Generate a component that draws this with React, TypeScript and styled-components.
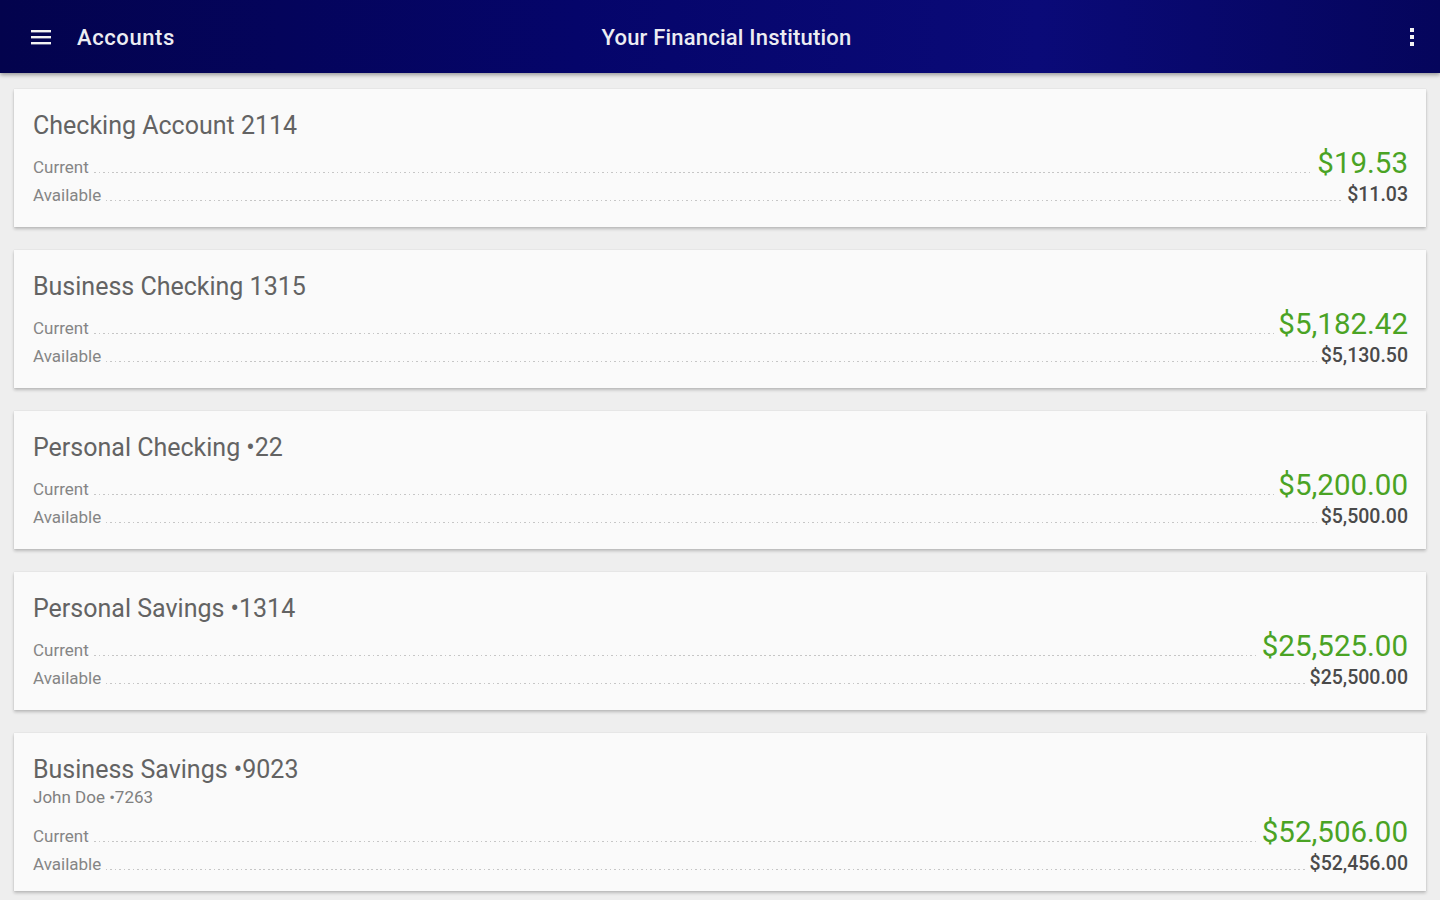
import React from "react";
import styled, { createGlobalStyle } from "styled-components";

const GlobalStyle = createGlobalStyle`
  html, body {
    margin: 0;
    padding: 0;
    background: #eeeeee;
    font-family: Roboto, "Noto Sans", sans-serif;
  }
`;

const Page = styled.div`
  width: 1440px;
  min-height: 900px;
  background: #eeeeee;
`;

const TopBar = styled.header`
  height: 73px;
  display: grid;
  grid-template-columns: 1fr auto 1fr;
  align-items: center;
  padding: 0 15px 0 28px;
  box-sizing: border-box;
  background: linear-gradient(90deg, #03034d 0%, #05056a 40%, #0a0a78 72%, #05055c 100%);
  box-shadow: 0 2px 4px rgba(0, 0, 0, 0.35);
  color: #ececf2;
`;

const BarSide = styled.div<{ $end?: boolean }>`
  display: flex;
  align-items: center;
  justify-content: ${(p) => (p.$end ? "flex-end" : "flex-start")};
`;

const IconButton = styled.button`
  border: 0;
  outline: 0;
  background: transparent;
  padding: 0;
  width: 26px;
  height: 26px;
  display: flex;
  align-items: center;
  justify-content: center;
  color: #f2f2f2;
  cursor: pointer;
`;

const BarTitle = styled.div`
  font-size: 22px;
  font-weight: 500;
  margin-left: 23px;
  letter-spacing: 0.6px;
  margin-top: 2px;
`;

const Institution = styled.div`
  font-size: 22px;
  font-weight: 500;
  letter-spacing: 0.2px;
  margin-top: 2px;
`;

const List = styled.main`
  display: flex;
  flex-direction: column;
  gap: 23px;
  padding: 16px 14px 9px 14px;
`;

const Card = styled.section<{ $tight?: boolean }>`
  background: #fafafa;
  box-shadow: 0 2px 3px rgba(0, 0, 0, 0.22), 0 0 1px rgba(0, 0, 0, 0.12);
  padding: 22px 18px ${(p) => (p.$tight ? 13 : 18)}px 19px;
  display: flex;
  flex-direction: column;
`;

const CardTitle = styled.div`
  font-size: 25px;
  line-height: 30px;
  color: #636363;
`;

const Owner = styled.div`
  font-size: 17px;
  line-height: 20px;
  color: #808080;
  margin-top: 2px;
`;

const Balances = styled.div<{ $gap: number }>`
  margin-top: ${(p) => p.$gap}px;
  display: flex;
  flex-direction: column;
  gap: 4px;
`;

const Row = styled.div`
  display: flex;
  align-items: baseline;
  height: 28px;
`;

const Label = styled.span`
  font-size: 17px;
  color: #858585;
`;

const Dots = styled.span`
  flex: 1;
  height: 1px;
  margin: 0 4px 0 5px;
  background-image: repeating-linear-gradient(90deg, #c6c6c6 0 1.5px, transparent 1.5px 4.5px);
`;

const Amount = styled.span<{ $main?: boolean }>`
  font-size: ${(p) => (p.$main ? "29.5px" : "19.5px")};
  font-weight: ${(p) => (p.$main ? 400 : 500)};
  color: ${(p) => (p.$main ? "#4aa324" : "#4a4a4a")};
  line-height: 28px;
`;

interface Account {
  name: string;
  owner?: string;
  current: string;
  available: string;
}

const accounts: Account[] = [
  { name: "Checking Account 2114", current: "$19.53", available: "$11.03" },
  { name: "Business Checking 1315", current: "$5,182.42", available: "$5,130.50" },
  { name: "Personal Checking \u202222", current: "$5,200.00", available: "$5,500.00" },
  { name: "Personal Savings \u20221314", current: "$25,525.00", available: "$25,500.00" },
  {
    name: "Business Savings \u20229023",
    owner: "John Doe \u20227263",
    current: "$52,506.00",
    available: "$52,456.00",
  },
];

const MenuIcon = () => (
  <svg width="22" height="18" viewBox="0 0 22 18">
    <rect x="1" y="2" width="20" height="2.4" fill="currentColor" />
    <rect x="1" y="8" width="20" height="2.4" fill="currentColor" />
    <rect x="1" y="14" width="20" height="2.4" fill="currentColor" />
  </svg>
);

const MoreIcon = () => (
  <svg width="6" height="20" viewBox="0 0 6 20">
    <rect x="1" y="1" width="4" height="4" fill="currentColor" />
    <rect x="1" y="8" width="4" height="4" fill="currentColor" />
    <rect x="1" y="15" width="4" height="4" fill="currentColor" />
  </svg>
);

const AccountCard = ({ account }: { account: Account }) => (
  <Card $tight={!!account.owner}>
    <CardTitle>{account.name}</CardTitle>
    {account.owner && <Owner>{account.owner}</Owner>}
    <Balances $gap={account.owner ? 11 : 8}>
      <Row>
        <Label>Current</Label>
        <Dots />
        <Amount $main>{account.current}</Amount>
      </Row>
      <Row>
        <Label>Available</Label>
        <Dots />
        <Amount>{account.available}</Amount>
      </Row>
    </Balances>
  </Card>
);

const App = () => {
  return (
    <Page>
      <GlobalStyle />
      <TopBar>
        <BarSide>
          <IconButton>
            <MenuIcon />
          </IconButton>
          <BarTitle>Accounts</BarTitle>
        </BarSide>
        <Institution>Your Financial Institution</Institution>
        <BarSide $end>
          <IconButton>
            <MoreIcon />
          </IconButton>
        </BarSide>
      </TopBar>
      <List>
        {accounts.map((a) => (
          <AccountCard key={a.name} account={a} />
        ))}
      </List>
    </Page>
  );
};

export default App;
